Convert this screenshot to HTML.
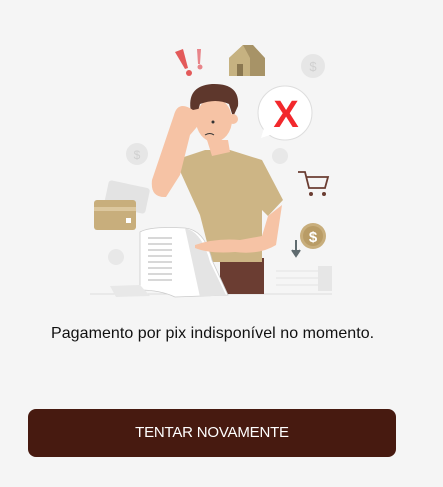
<!DOCTYPE html>
<html><head><meta charset="utf-8"><style>
html,body{margin:0;padding:0;background:#f5f5f5;width:443px;height:487px;overflow:hidden;font-family:"Liberation Sans",sans-serif}
svg{position:absolute;left:0;top:0}
.t{position:absolute;left:51px;top:325px;font-size:16px;color:#111;white-space:nowrap;letter-spacing:0.05px}
.b{position:absolute;left:28px;top:409px;width:368px;height:48px;background:#471a10;border-radius:8px;color:#fff;font-size:15px;text-align:center;line-height:48px;letter-spacing:-0.2px}
</style></head><body>
<svg width="443" height="320" viewBox="0 0 443 320">
<line x1="90" y1="294" x2="332" y2="294" stroke="#ddd" stroke-width="1"/>
<circle cx="313" cy="66" r="12" fill="#e6e6e6"/><text x="313" y="71" font-size="13" fill="#d0d0d0" text-anchor="middle">$</text>
<circle cx="137" cy="154" r="11" fill="#e6e6e6"/><text x="137" y="159" font-size="12" fill="#d0d0d0" text-anchor="middle">$</text>
<circle cx="280" cy="156" r="8" fill="#e8e8e8"/>
<circle cx="116" cy="257" r="8" fill="#e8e8e8"/>
<path d="M175 52 L183 49 L188 68 L185 69Z" fill="#e35a5a"/><circle cx="189" cy="73" r="3" fill="#e35a5a"/>
<path d="M197 49 L201 49 L200 64 L198 64Z" fill="#e8858a"/><circle cx="200" cy="67" r="2.5" fill="#e8858a"/>
<path d="M229 58 L243 45 L253 45 L265 58 L265 76 L229 76Z" fill="#a79367"/>
<path d="M229 58 L243 45 L250 58 L250 76 L229 76Z" fill="#c6b281"/>
<rect x="237" y="64" width="6" height="12" fill="#8a7750"/>
<circle cx="285" cy="113" r="27" fill="#fff" stroke="#ddd"/>
<path d="M264 128 L261 138 L273 134Z" fill="#fff"/>
<text x="286" y="127" font-size="38" font-weight="bold" fill="#f2282c" text-anchor="middle">X</text>
<rect x="106" y="184" width="42" height="26" rx="3" fill="#e3e3e3" transform="rotate(12 127 197)"/>
<rect x="94" y="200" width="42" height="30" rx="3" fill="#c8ae7c"/>
<rect x="94" y="207" width="42" height="4" fill="#dcc79e"/>
<rect x="126" y="218" width="5" height="5" fill="#fff"/>
<path d="M298 172 L305 172 L309 188 L325 188 L328 177 L306 177" fill="none" stroke="#6b3d32" stroke-width="1.8"/>
<circle cx="311" cy="194" r="2" fill="#6b3d32"/><circle cx="324" cy="194" r="2" fill="#6b3d32"/>
<circle cx="313" cy="236" r="13" fill="#c8ae7c"/><circle cx="313" cy="236" r="10" fill="#b99c66"/>
<text x="313" y="242" font-size="15" font-weight="bold" fill="#fff" text-anchor="middle">$</text>
<path d="M296 240 L296 252 M292 250 L296 256 L300 250" stroke="#5f6b6f" stroke-width="2" fill="#5f6b6f"/>
<rect x="318" y="266" width="14" height="25" fill="#e6e6e6"/>
<line x1="276" y1="271" x2="318" y2="271" stroke="#e3e3e3"/><line x1="276" y1="278" x2="318" y2="278" stroke="#e3e3e3"/><line x1="276" y1="285" x2="318" y2="285" stroke="#e3e3e3"/>
<rect x="220" y="258" width="44" height="36" fill="#6b3d32"/>
<path d="M175 160 L205 150 L230 150 L262 160 L283 200 L268 216 L262 210 L262 262 L212 262 L200 215 Z" fill="#cdb585"/>
<path d="M207 140 L228 140 L230 152 L212 156Z" fill="#f6c3a5"/>
<ellipse cx="214" cy="120" rx="18" ry="22" fill="#f6c3a5"/>
<path d="M191 112 Q186 86 212 84 Q240 83 238 106 L233 117 L229 104 Q216 98 200 104 L196 118Z" fill="#5e372c"/>
<circle cx="233" cy="119" r="5" fill="#f6c3a5"/>
<circle cx="213" cy="122" r="1.5" fill="#333"/>
<path d="M205 135 Q210 132 214 135" stroke="#333" fill="none" stroke-width="1"/>
<path d="M193 110 Q178 100 174 115 L152 180 Q150 198 166 197 L180 175 L190 135 Q205 118 212 106 Z" fill="#f6c3a5"/>
<path d="M140 232 Q150 226 185 228 Q205 230 212 260 L228 295 L175 297 Q160 290 140 290 Z" fill="#fff" stroke="#ccc" stroke-width="0.8"/>
<path d="M185 228 Q202 232 210 262 L226 295 L200 297Z" fill="#e4e4e4"/>
<g stroke="#999" stroke-width="0.7">
<line x1="148" y1="238" x2="172" y2="238"/><line x1="148" y1="244" x2="172" y2="244"/><line x1="148" y1="250" x2="172" y2="250"/><line x1="148" y1="256" x2="172" y2="256"/><line x1="148" y1="262" x2="172" y2="262"/><line x1="148" y1="268" x2="172" y2="268"/><line x1="148" y1="274" x2="172" y2="274"/><line x1="148" y1="280" x2="172" y2="280"/>
</g>
<path d="M110 286 L140 285 L150 296 L116 297Z" fill="#e8e8e8"/>
<path d="M195 245 Q215 238 240 240 L262 236 L268 216 L282 205 L276 245 Q260 255 235 252 Q210 254 195 248Z" fill="#f6c3a5"/>
</svg>
<div class="t">Pagamento por pix indisponível no momento.</div>
<div class="b">TENTAR NOVAMENTE</div>
</body></html>
